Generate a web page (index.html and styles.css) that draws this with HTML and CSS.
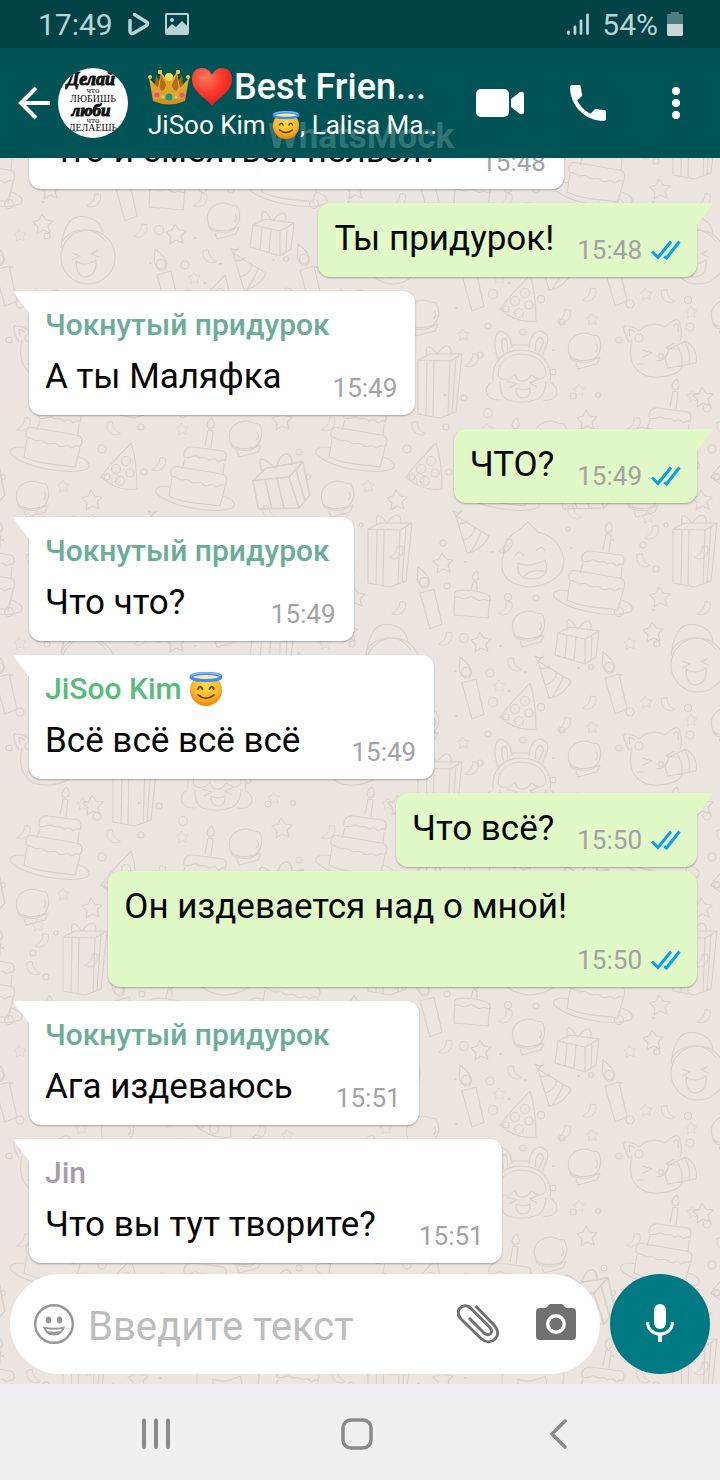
FILE: index.html
```html
<!DOCTYPE html>
<html lang="ru">
<head>
<meta charset="utf-8">
<meta name="viewport" content="width=device-width, initial-scale=1">
<title>Best Friends</title>
<link rel="stylesheet" href="styles.css">
</head>
<body>
<svg class="defs" aria-hidden="true">
  <defs>
    <symbol id="checks" viewBox="0 0 30 20">
      <path d="M1 11.500L7 17.500L20 1.500M13 16.500L15.500 18L28.500 1.500" fill="none" stroke="#0b9df0" stroke-width="3"/>
    </symbol>
    <radialGradient id="faceFill" cx="50%" cy="35%" r="65%">
      <stop offset="0" stop-color="#ffe04d"/><stop offset=".65" stop-color="#fcb827"/><stop offset="1" stop-color="#ee7f0c"/>
    </radialGradient>
    <symbol id="angel" viewBox="0 0 34 34">
      <circle cx="17" cy="18" r="16" fill="url(#faceFill)"/>
      <ellipse cx="17" cy="5" rx="15" ry="3.600" fill="#ffe9a0" stroke="#3d8ff0" stroke-width="3"/>
      <path d="M2.500 3.500C8 0 26 0 31.500 3.500" fill="none" stroke="#8cc3fb" stroke-width="1.200"/>
      <path d="M9 17q2-4.500 4.500 0M20.500 17q2.200-4.500 4.500 0M9 23q8 6.500 16 0" fill="none" stroke="#7a4210" stroke-width="1.800" stroke-linecap="round"/>
    </symbol>
    <linearGradient id="gold" x1="0" y1="0" x2="0" y2="1">
      <stop offset="0" stop-color="#efbd3c"/><stop offset="1" stop-color="#d08c1c"/>
    </linearGradient>
    <radialGradient id="heartFill" cx="35%" cy="25%" r="80%">
      <stop offset="0" stop-color="#ff7a5c"/><stop offset=".5" stop-color="#fa3a2c"/><stop offset="1" stop-color="#dd1d1f"/>
    </radialGradient>

    <path id="star" d="M-1-10L3-4L10-3L5 2L7 9L0 6L-6 10L-5 3L-10-2L-4-4Z"/>
    <path id="ribbon" d="M3-8L10-7Q12 6-1 9L-7 7Q4 2 3-8Z"/>
    <g id="cake">
      <path d="M50 28L53 12L58 13L56 30M55 11C50 8 52 3 57 0C61 7 59 10 55 11Z"/>
      <path d="M29 39C28 32 33 28 38 29L68 33C73 35 71 40 70 43C67 40 66 43 63 44C60 39 57 41 54 42C50 37 46 42 43 39C39 35 36 42 29 39ZM30 41L27 51M69 45L68 56"/>
      <path d="M16 57C15 50 19 47 25 49L66 56C73 57 73 63 70 68C66 64 64 69 61 69C57 63 53 70 49 67C45 61 40 67 36 64C31 58 27 65 23 60C20 58 18 60 16 57ZM17 60L14 78C30 86 47 85 65 88L70 69"/>
      <path d="M15 69C5 66-3 71 2 76C18 90 61 96 77 90C83 86 76 80 68 78"/>
    </g>
    <g id="tallgift">
      <path d="M0 16L32 17L44 10L38 68L22 74L0 70ZM32 17L30 72M9 17L8 71M16 17L15 72M38 14L34 69M0 16L12 10L44 10M19 10C11 0 7 0 9 12M19 10C27-1 34 0 33 11"/>
    </g>
    <g id="giftbox">
      <path d="M3 16L30 22L44 14L41 40L30 47L0 38ZM30 22L30 47M12 18L10 41M21 20L19 44M37 18L36 43M3 16L15 10L44 14M22 12C14-2 11 0 12 13M23 12C32-1 39 4 35 14"/>
    </g>
    <g id="candle">
      <path d="M3 26L17 22L25 57L13 62Z"/>
      <path d="M6 21C-3 14 1 10 1 0C10 7 16 14 10 21Z"/>
      <circle cx="7" cy="15" r="4.500"/>
    </g>
    <g id="pizza">
      <path d="M30 0C20 11 9 21 0 34C10 43 22 48 36 46C36 31 35 15 30 0Z"/>
      <circle cx="25" cy="18" r="4.500"/><circle cx="15" cy="26" r="4.500"/><circle cx="19" cy="38" r="4.500"/><circle cx="29" cy="30" r="4"/><circle cx="6" cy="34" r="3"/>
    </g>
    <g id="bun">
      <path d="M2 24C-5 5 14-3 24 3L30 4C36 14 31 25 25 27C14 30 6 28 2 24ZM2 24C2 29 9 31 21 30L32 25L29 32L10 37L8 31M28 12C31 16 29 19 27 20"/>
    </g>
    <g id="hat">
      <path d="M3 5L14 42C22 42 33 33 36 25ZM6 13C12 12 13 12 15 9M10 29C18 27 21 23 22 16M17 41C22 36 25 28 28 21M3 5L0 0L5 2L9 0Z"/>
    </g>
    <g id="birthday" fill="none" stroke="#dad0c9" stroke-width="1.200" stroke-linejoin="round">
      <use href="#tallgift" x="673" y="513"/><use href="#tallgift" x="418" y="752"/>
      <use href="#candle" x="417" y="567"/><use href="#candle" x="459" y="657"/><use href="#candle" x="602" y="652"/>
      <use href="#hat" x="453" y="511"/><use href="#hat" x="535" y="656"/>
      <use href="#cake" x="553" y="522"/><use href="#cake" x="620" y="787"/><use href="#cake" x="460" y="826"/>
      <use href="#bun" x="512" y="610"/><use href="#bun" x="568" y="740"/><use href="#bun" x="406" y="707"/><use href="#bun" x="534" y="828"/><use href="#bun" x="626" y="888"/>
      <use href="#giftbox" x="555" y="617"/>
      <g transform="translate(548 870) rotate(-18) scale(1.300)"><use href="#giftbox"/></g>
      <use href="#pizza" x="500" y="683"/><use href="#pizza" x="406" y="851"/>
      <path d="M504 551C504 540 513 533 519 530L528 522L538 532C556 536 562 550 564 560C565 576 549 585 531 587C511 586 500 577 502 562ZM515 556q4-8 9 0M536 551q5-7 9 0M518 563C527 568 539 563 545 560C551 575 541 579 531 579C521 579 517 574 518 563ZM524 576q10-8 22-4"/>
      <path d="M455 592C460 588 485 591 490 597L488 618L454 615ZM454 598C459 594 463 602 468 598C473 593 476 603 481 600C485 597 488 603 491 600M471 590L473 582L477 583L477 590M475 581C470 578 473 574 477 571C480 576 479 580 475 581"/>
      <circle cx="698" cy="665" r="27"/>
      <path d="M671 656C674 629 683 622 697 625C710 628 713 638 713 642M671 651C682 634 705 633 716 650M682 661l8 3l-8 4M708 658l-7 4l8 3M686 669C692 674 700 672 706 668C707 682 700 685 694 685C687 683 686 676 686 669Z"/>
      <path d="M499 770C490 746 498 737 503 740C511 743 511 750 512 756M529 756C530 740 540 735 547 743C551 750 543 757 543 764M504 762C500 752 502 745 505 746C508 748 507 755 508 759M535 759C535 748 540 742 543 748C545 752 539 757 538 763M512 753L530 753M493 789C491 767 507 757 522 758C541 759 553 771 550 789M498 783C498 770 508 762 522 762C537 763 546 771 546 783C539 792 534 783 531 783C526 792 517 791 515 782C509 790 501 789 498 783M500 789q-1 15 8 19Q522 813 538 807Q546 801 546 789M492 790C483 795 484 808 500 808M550 790C562 797 558 810 543 808M507 789l10 3l-8 4M539 787l-9 4l7 4M516 796q7 4 14 0Q531 806 523 806Q515 805 516 796Z"/>
      <path d="M629 750C624 743 622 732 626 734C632 734 635 735 639 739C649 729 659 732 665 735C676 724 681 727 680 734C683 741 681 745 680 750M632 748C626 776 641 786 659 785C673 784 682 779 683 773M630 744L629 737L635 740M673 734q7-6 5 6M642 758l10 3l-9 4M674 751l-8 5l10 1M637 772l7 0M656 768C663 771 667 764 669 757L686 749C693 754 698 762 696 771L668 776L665 766M677 754q6 9 5 19M685 750q6 11 4 22"/>
      <circle cx="639" cy="746" r="4"/><circle cx="661" cy="764" r="2.500"/>
      <use href="#star" x="443" y="563"/><use href="#star" x="660" y="597"/><use href="#star" x="653" y="632"/><use href="#star" x="481" y="642"/><use href="#star" x="587" y="828"/><use href="#star" x="703" y="805"/><use href="#star" x="702" y="908"/>
      <g transform="scale(.6)"><use href="#star" x="1050" y="1072"/><use href="#star" x="832" y="1143"/><use href="#star" x="1077" y="1170"/><use href="#star" x="987" y="1212"/><use href="#star" x="1152" y="1200"/><use href="#star" x="772" y="1238"/><use href="#star" x="1155" y="1340"/><use href="#star" x="965" y="1330"/><use href="#star" x="812" y="1395"/><use href="#star" x="1122" y="1490"/><use href="#star" x="1080" y="862"/><use href="#star" x="700" y="1476"/></g>
      <g transform="scale(.8)"><use href="#ribbon" x="555" y="798"/><use href="#ribbon" x="735" y="878"/><use href="#ribbon" x="813" y="665"/><use href="#ribbon" x="875" y="690"/><use href="#ribbon" x="630" y="682"/><use href="#ribbon" x="630" y="760"/><use href="#ribbon" x="878" y="760"/><use href="#ribbon" x="703" y="905"/><use href="#ribbon" x="588" y="960"/><use href="#ribbon" x="790" y="1040"/><use href="#ribbon" x="578" y="1090"/></g>
      <g transform="scale(-.8 .8)"><use href="#ribbon" x="-806" y="700"/><use href="#ribbon" x="-645" y="830"/><use href="#ribbon" x="-837" y="880"/><use href="#ribbon" x="-525" y="1045"/><use href="#ribbon" x="-720" y="640"/></g>
      <circle cx="443" cy="543" r="3"/><circle cx="506" cy="548" r="3"/><circle cx="447" cy="586" r="3"/><circle cx="508" cy="597" r="3.500"/><circle cx="536" cy="598" r="3"/><circle cx="619" cy="612" r="4.500"/><circle cx="643" cy="545" r="3"/><circle cx="656" cy="569" r="3"/><circle cx="464" cy="638" r="4.500"/><circle cx="490" cy="673" r="4"/><circle cx="493" cy="702" r="4.500"/><circle cx="541" cy="707" r="3.500"/><circle cx="630" cy="712" r="4"/><circle cx="488" cy="734" r="3"/><circle cx="523" cy="740" r="3"/><circle cx="619" cy="748" r="3"/><circle cx="562" cy="730" r="3"/><circle cx="688" cy="708" r="3.500"/><circle cx="690" cy="735" r="4"/><circle cx="657" cy="644" r="3"/><circle cx="591" cy="667" r="2.500"/><circle cx="480" cy="763" r="3"/><circle cx="553" cy="780" r="3"/><circle cx="464" cy="806" r="3"/><circle cx="488" cy="821" r="4.500"/><circle cx="573" cy="804" r="3"/><circle cx="598" cy="803" r="2.500"/><circle cx="707" cy="816" r="4"/><circle cx="446" cy="835" r="3"/><circle cx="604" cy="860" r="3"/><circle cx="613" cy="885" r="2.500"/><circle cx="712" cy="857" r="4"/><circle cx="449" cy="880" r="3"/><circle cx="666" cy="525" r="2"/><circle cx="568" cy="529" r="2"/>
      <path d="M492 552h1M465 562h1M500 646h1M455 671h1M509 691h1M525 672h1M578 668h1M456 716h1M571 548h1M612 540h1M553 758h1M444 803h1M653 610h1M621 675h1" stroke-width="2" stroke-linecap="round"/>
    </g>
    <pattern id="tile" width="305" height="408" patternUnits="userSpaceOnUse" patternTransform="translate(415 342)">
      <g transform="translate(-415 -500)">
        <use href="#birthday"/><use href="#birthday" x="-305"/><use href="#birthday" x="305"/><use href="#birthday" y="-408"/><use href="#birthday" x="-305" y="-408"/>
      </g>
    </pattern>
  </defs>
</svg>

<div class="status">
  <span class="status-time">17:49</span>
  <svg class="status-play" width="22" height="24" viewBox="0 0 22 24" aria-hidden="true"><path d="M2 8.500V19C2 21.500 4 22 6 21L18.500 13.500C20 12.500 20 11 18.500 10L6.500 2.500" fill="none" stroke="#b9d3d6" stroke-width="3.500" stroke-linecap="round" stroke-linejoin="round"/></svg>
  <svg width="24" height="22" viewBox="0 0 24 22" aria-hidden="true"><rect x="1" y="1" width="22" height="20" rx="1" fill="none" stroke="#b9d3d6" stroke-width="2"/><circle cx="7" cy="7" r="2" fill="#b9d3d6"/><path d="M2 16L7 11L11 14L17 8L22 13V20H2Z" fill="#b9d3d6"/></svg>
  <div class="status-right">
    <svg class="signal" width="22" height="24" viewBox="0 0 22 24" aria-hidden="true"><path d="M1.500 20v1.500M8 15v6.500M14 9v12.500M20.500 3v18.500" stroke="#b9d3d6" stroke-width="2.800" stroke-linecap="round"/></svg>
    <span>54%</span>
    <svg width="16" height="24" viewBox="0 0 16 24" aria-hidden="true"><path d="M4 0h8v2h3l1 1v9H0V3l1-1h3Z" fill="#4c7e81"/><path d="M0 12h16v11l-1 1H1l-1-1Z" fill="#c9d6d8"/></svg>
  </div>
</div>

<header class="header">
  <span class="watermark">WhatsMock</span>
  <button class="icon-btn" aria-label="Назад"><svg width="32" height="34" viewBox="0 0 32 34"><path d="M32 17H3M18 2L3 17L18 32" fill="none" stroke="#fff" stroke-width="4"/></svg></button>
  <svg class="avatar" width="70" height="70" viewBox="0 0 70 70" role="img" aria-label="Фото группы">
    <clipPath id="round"><circle cx="35" cy="35" r="35"/></clipPath>
    <g clip-path="url(#round)">
      <rect width="70" height="70" fill="#fff"/>
      <g text-anchor="middle" fill="#111" font-family="Liberation Serif, serif">
        <text x="33" y="17" font-size="18" font-weight="700" font-style="italic" stroke="#111">Делай</text>
        <text x="35" y="25" font-size="9">что</text>
        <text x="35" y="34" font-size="10">ЛЮБИШЬ</text>
        <text x="33" y="48" font-size="17" font-weight="700" font-style="italic" stroke="#111">люби</text>
        <text x="35" y="55" font-size="9">что</text>
        <text x="35" y="63" font-size="10">ДЕЛАЕШЬ</text>
      </g>
    </g>
  </svg>
  <div class="heading">
    <h1 class="title">
      <svg width="42" height="38" viewBox="0 0 42 38" role="img" aria-label="корона">
        <path d="M6 27L8 7L15 19L21 6L27 19L34 7L36 27Z" fill="#a8640f"/>
        <path d="M5 33L1 10L10 20L13 4L21 15L29 4L32 20L41 10L37 33Q21 40 5 33Z" fill="url(#gold)"/>
        <path d="M11 24L13 6L20 20M31 24L29 6L22 20" fill="#b06f14"/>
        <path d="M5 27L10 18L15 25L21 10L27 25L32 18L37 27L36 31H6Z" fill="#e0a32b"/>
        <circle cx="21" cy="9" r="4" fill="#ffd64f"/><circle cx="2" cy="9" r="2" fill="#f5c541"/><circle cx="40" cy="9" r="2" fill="#f5c541"/><circle cx="12" cy="4" r="2.200" fill="#f5c541"/><circle cx="30" cy="4" r="2.200" fill="#f5c541"/>
        <circle cx="21" cy="29" r="3.500" fill="#159a84"/><circle cx="9" cy="27" r="2.600" fill="#e4518b"/><circle cx="34" cy="27" r="2.600" fill="#e4518b"/><circle cx="15" cy="29" r="1.400" fill="#b9dc66"/><circle cx="28" cy="29" r="1.400" fill="#b9dc66"/>
      </svg>
      <svg width="40" height="40" viewBox="0 0 40 40" role="img" aria-label="сердце"><path d="M20 39C16 32 0 26 0 12C0 4 5 1 10 1C15 1 18 4 20 8C22 4 25 1 30 1C35 1 40 4 40 12C40 26 24 32 20 39Z" fill="url(#heartFill)"/></svg>
      <span>Best Frien...</span>
    </h1>
    <p class="members">JiSoo Kim <svg width="28" height="28" role="img" aria-label="ангел"><use href="#angel"/></svg>, Lalisa Ma..</p>
  </div>
  <div class="actions">
    <button class="icon-btn" aria-label="Видеозвонок"><svg width="48" height="28" viewBox="0 0 48 28"><rect width="33" height="28" rx="5" fill="#fff"/><path d="M35 10L44 3Q48 2 48 5V23Q48 26 44 25L35 18Z" fill="#fff"/></svg></button>
    <button class="icon-btn" aria-label="Звонок"><svg width="36" height="36" viewBox="3 3 18 18"><path d="M6.620 10.790c1.440 2.830 3.760 5.140 6.590 6.590l2.200-2.200c.27-.27.67-.36 1.020-.24 1.120.37 2.330.57 3.570.57.55 0 1 .45 1 1V20c0 .55-.45 1-1 1-9.390 0-17-7.610-17-17 0-.55.45-1 1-1h3.500c.55 0 1 .45 1 1 0 1.250.2 2.450.57 3.570.11.35.03.74-.25 1.020z" fill="#fff"/></svg></button>
    <button class="icon-btn" aria-label="Меню"><svg width="8" height="32" viewBox="0 0 8 32"><g fill="#fff"><circle cx="4" cy="4" r="4"/><circle cx="4" cy="16" r="4"/><circle cx="4" cy="28" r="4"/></g></svg></button>
  </div>
</header>

<main class="chat">
  <svg class="wallpaper" aria-hidden="true"><rect width="100%" height="100%" fill="url(#tile)"/></svg>
  <ol class="messages">
    <li class="bubble in"><div class="row"><p class="text">Что и смеяться нельзя?</p><time>15:48</time></div></li>
    <li class="bubble out tail"><div class="row"><p class="text">Ты придурок!</p><time>15:48 <svg><use href="#checks"/></svg></time></div></li>
    <li class="bubble in tail"><p class="name teal">Чокнутый придурок</p><div class="row wide"><p class="text">А ты Маляфка</p><time>15:49</time></div></li>
    <li class="bubble out tail"><div class="row"><p class="text">ЧТО?</p><time>15:49 <svg><use href="#checks"/></svg></time></div></li>
    <li class="bubble in tail"><p class="name teal">Чокнутый придурок</p><div class="row"><p class="text">Что что?</p><time>15:49</time></div></li>
    <li class="bubble in tail"><p class="name green">JiSoo Kim <svg width="34" height="34" role="img" aria-label="ангел"><use href="#angel"/></svg></p><div class="row wide"><p class="text">Всё всё всё всё</p><time>15:49</time></div></li>
    <li class="bubble out tail"><div class="row"><p class="text">Что всё?</p><time>15:50 <svg><use href="#checks"/></svg></time></div></li>
    <li class="bubble out joined"><div class="row stacked"><p class="text">Он издевается над о мной!</p><time>15:50 <svg><use href="#checks"/></svg></time></div></li>
    <li class="bubble in tail"><p class="name teal">Чокнутый придурок</p><div class="row"><p class="text">Ага издеваюсь</p><time>15:51</time></div></li>
    <li class="bubble in tail"><p class="name mauve">Jin</p><div class="row"><p class="text">Что вы тут творите?</p><time>15:51</time></div></li>
  </ol>
  <form class="composer">
    <div class="field">
      <button type="button" class="icon-btn" aria-label="Эмодзи"><svg width="40" height="40" viewBox="0 0 40 40"><circle cx="20" cy="20" r="18.800" fill="none" stroke="#97979b" stroke-width="2.400"/><ellipse cx="14.500" cy="16" rx="2.700" ry="3.500" fill="#97979b"/><ellipse cx="25.500" cy="16" rx="2.700" ry="3.500" fill="#97979b"/><path d="M9 22.500Q20 25 31 22.500Q29 31.500 20 31.500Q11 31.500 9 22.500Z" fill="#97979b"/><path d="M12 24.800Q20 26.500 28 24.800L27 26.800Q20 28.500 13 26.800Z" fill="#fff"/></svg></button>
      <input class="entry" type="text" placeholder="Введите текст" aria-label="Введите текст">
      <button type="button" class="icon-btn" aria-label="Прикрепить"><svg width="42" height="40" viewBox="0 0 42 40"><path d="M18.500 2L37 21C41 25.500 42 31 38 35C34 39 28.500 38.500 24 34.500L4 15C0.500 11 0.500 7 3 4C6 1 10.500 1 14 4.500L32.500 23C35 25.500 35 28 33.500 29.500C32 31 29.500 31 27 29L12 14" fill="none" stroke="#717073" stroke-width="3"/></svg></button>
      <button type="button" class="icon-btn camera" aria-label="Камера"><svg width="40" height="36" viewBox="0 0 40 36"><path fill-rule="evenodd" d="M14 0H26L30 4H36Q40 4 40 8V32Q40 36 36 36H4Q0 36 0 32V8Q0 4 4 4H10ZM20 10A10 10 0 1 0 20 30A10 10 0 1 0 20 10Z" fill="#717073"/><circle cx="20" cy="20" r="6.500" fill="#717073"/></svg></button>
    </div>
    <button type="button" class="mic" aria-label="Голосовое сообщение"><svg width="28" height="38" viewBox="0 0 28 38"><rect x="8" width="12" height="25" rx="6" fill="#fff"/><path d="M1.500 18C1.500 34 26.500 34 26.500 18" fill="none" stroke="#fff" stroke-width="3"/><path d="M14 29V38" stroke="#fff" stroke-width="4"/></svg></button>
  </form>
</main>

<nav class="nav" aria-label="Система">
  <button class="icon-btn" aria-label="Недавние"><svg width="30" height="32" viewBox="0 0 30 32"><path d="M3 2.500V29M15 2.500V29M27 2.500V29" stroke="#8a898c" stroke-width="4" stroke-linecap="round"/></svg></button>
  <button class="icon-btn" aria-label="Домой"><svg width="32" height="32" viewBox="0 0 32 32"><rect x="2" y="2" width="28" height="28" rx="8" fill="none" stroke="#8a898c" stroke-width="3.500"/></svg></button>
  <button class="icon-btn" aria-label="Назад"><svg width="18" height="32" viewBox="0 0 18 32"><path d="M16 3L3 16L16 29" fill="none" stroke="#8a898c" stroke-width="3.500" stroke-linecap="round"/></svg></button>
</nav>
</body>
</html>
```
FILE: styles.css
```css
* { box-sizing: border-box; }
body {
  margin: 0;
  height: 100vh;
  display: flex;
  flex-direction: column;
  overflow: hidden;
  font-family: Roboto, "Liberation Sans", sans-serif;
  background: #f1eff3;
}
h1, p, ol { margin: 0; padding: 0; list-style: none; }
svg { display: block; flex: none; }
.defs { position: absolute; width: 0; height: 0; }
.icon-btn {
  display: flex;
  align-items: center;
  justify-content: center;
  padding: 0;
  border: 0;
  background: none;
}
.status {
  flex: none;
  display: flex;
  align-items: center;
  gap: 15px;
  height: 48px;
  padding: 0 37px 0 38px;
  background: #004346;
  color: #b9d3d6;
  font-size: 30px;
}
.status-right { margin-left: auto; display: flex; align-items: center; gap: 9px; }
.signal { margin-right: 4px; }
.header {
  position: relative;
  flex: none;
  display: flex;
  align-items: center;
  height: 110px;
  padding: 0 40px 0 18px;
  background: #005355;
  color: #fff;
}
.watermark {
  position: absolute;
  left: 268px;
  bottom: 0;
  font-size: 35px;
  font-weight: 700;
  line-height: 42px;
  color: rgba(255, 255, 255, .2);
}
.avatar { margin: 0 20px 0 8px; }
.heading { position: relative; flex: 1; min-width: 0; padding-top: 2px; white-space: nowrap; }
.title {
  display: flex;
  align-items: center;
  gap: 2px;
  font-size: 36px;
  font-weight: 500;
  line-height: 42px;
}
.members { display: flex; align-items: center; font-size: 26px; line-height: 34px; white-space: pre; }
.actions { display: flex; align-items: center; }
.actions .icon-btn + .icon-btn { margin-left: 46px; }
.actions .icon-btn:last-child { margin-left: 66px; }
.chat {
  position: relative;
  flex: 1;
  min-height: 0;
  display: flex;
  flex-direction: column;
  background: #ece4df;
}
.wallpaper { position: absolute; inset: 0; width: 100%; height: 100%; }
.messages {
  position: relative;
  flex: 1;
  min-height: 0;
  overflow: hidden;
  display: flex;
  flex-direction: column;
  justify-content: flex-end;
  padding: 0 23px 11px 29px;
}
.bubble {
  position: relative;
  flex: none;
  margin-top: 14px;
  padding: 13px 18px 12px 16px;
  border-radius: 12px;
  background: #fff;
  box-shadow: 0 1px 2px rgba(0, 0, 0, .3);
}
.in { align-self: flex-start; }
.out { align-self: flex-end; padding-right: 16px; background: #e1f8c7; }
.joined { margin-top: 4px; }
.in.tail { border-top-left-radius: 0; }
.out.tail { border-top-right-radius: 0; }
.tail::before {
  content: "";
  position: absolute;
  top: 0;
  width: 15px;
  height: 22px;
  background: inherit;
}
.in.tail::before { right: 100%; clip-path: polygon(0 0, 100% 0, 100% 100%, 0 2px); }
.out.tail::before { left: 100%; clip-path: polygon(0 0, 100% 0, 100% 2px, 0 100%); }
.name {
  display: flex;
  align-items: center;
  margin: 0 6px 8px 0;
  font-size: 30px;
  font-weight: 500;
  line-height: 42px;
  white-space: pre;
}
.teal { color: #6aad98; }
.green { color: #56bd7d; }
.mauve { color: #a79bae; }
.row { display: flex; align-items: flex-end; justify-content: space-between; gap: 43px; }
.wide { gap: 51px; }
.out .row { gap: 23px; }
.text { padding: 2px 0 5px; font-size: 35px; line-height: 42px; color: #060606; }
.bubble time {
  display: flex;
  align-items: center;
  gap: 9px;
  font-size: 26px;
  line-height: 30px;
  color: #a2a2a7;
}
.bubble time svg { width: 30px; height: 20px; }
.out .stacked { flex-direction: column; gap: 12px; }
.stacked .text { padding-right: 114px; }
.composer { position: relative; flex: none; display: flex; gap: 10px; padding: 0 10px 10px; }
.field {
  flex: 1;
  min-width: 0;
  display: flex;
  align-items: center;
  height: 100px;
  padding: 0 24px;
  border-radius: 50px;
  background: #fff;
}
.entry {
  flex: 1;
  min-width: 0;
  margin: 4px 15px 0 14px;
  padding: 0;
  border: 0;
  outline: 0;
  background: none;
  font: 40px Roboto, "Liberation Sans", sans-serif;
}
.entry::placeholder { color: #bebdbd; opacity: 1; }
.camera { margin: 0 0 4px 37px; }
.mic {
  width: 100px;
  height: 100px;
  display: flex;
  align-items: center;
  justify-content: center;
  padding: 0 0 2px;
  border: 0;
  border-radius: 50%;
  background: #007a82;
}
.nav {
  flex: none;
  display: grid;
  grid-template-columns: repeat(3, 1fr);
  height: 96px;
  padding: 4px 62px 0 56px;
}
```
